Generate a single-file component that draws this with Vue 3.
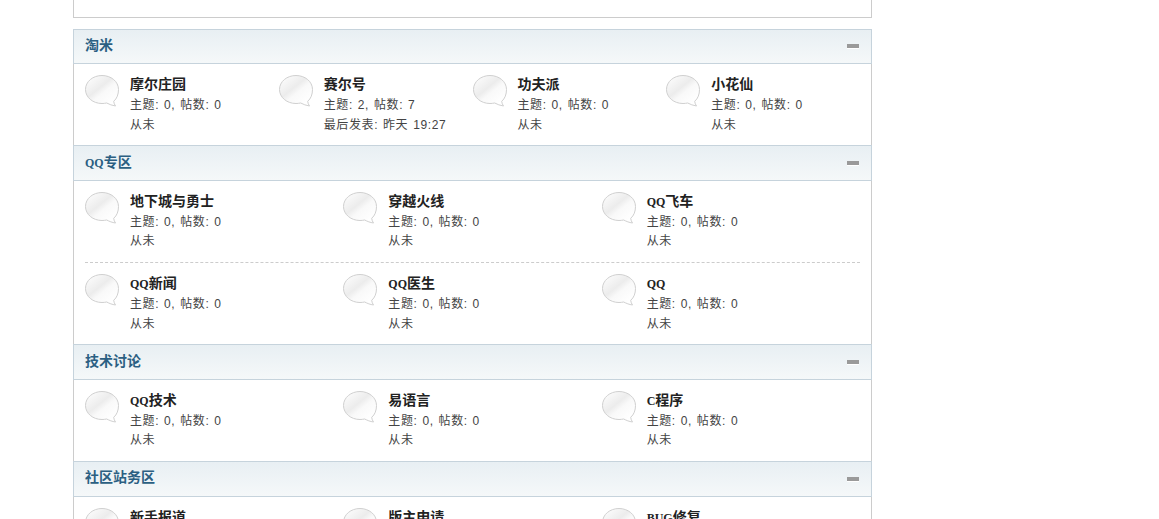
<template>
  <div class="page">
    <div class="top-box"></div>

    <div class="section" v-for="sec in sections" :key="sec.title">
      <div class="section-head">
        <h2>
          <span v-for="(p, i) in splitLatin(sec.title)" :key="i" :class="{ latin: p.latin }">{{ p.text }}</span>
        </h2>
        <span class="collapse"></span>
      </div>
      <div class="section-body">
        <div class="row" :class="'cols-' + sec.cols" v-for="(row, i) in sec.rows" :key="i">
          <div class="forum" v-for="f in row" :key="f.name">
            <svg class="bubble" width="36" height="34" viewBox="0 0 36 34">
              <defs>
                <linearGradient id="bubbleFill" x1="0.1" y1="0.1" x2="0.8" y2="0.9">
                  <stop offset="0" stop-color="#fbfbfb" />
                  <stop offset="0.42" stop-color="#ececec" />
                  <stop offset="0.6" stop-color="#f9f9f9" />
                  <stop offset="1" stop-color="#ffffff" />
                </linearGradient>
              </defs>
              <path
                d="M18 1.500C9 1.500 1.500 7.500 1.500 15.500 1.500 23.500 9 29.500 18 29.500c1.600 0 3.200-.2 4.700-.5 2.600 1.400 5.500 2.500 8.800 3-1-1.300-1.600-2.900-1.800-4.700C32.900 24.600 34.500 20.400 34.500 15.500 34.500 7.500 27 1.500 18 1.500z"
                fill="url(#bubbleFill)"
                stroke="#d0d0d0"
                stroke-width="1"
              />
            </svg>
            <div class="info">
              <div class="name">
                <span v-for="(p, j) in splitLatin(f.name)" :key="j" :class="{ latin: p.latin }">{{ p.text }}</span>
              </div>
              <div class="stat">主题: {{ f.topics }}, 帖数: {{ f.posts }}</div>
              <div class="stat">{{ f.last }}</div>
            </div>
          </div>
        </div>
      </div>
    </div>
  </div>
</template>

<script setup>
const forum = (name, topics = 0, posts = 0, last = '从未') => ({ name, topics, posts, last })

// 拉丁字母比中文窄，单独包一层
const splitLatin = (text) =>
  text.split(/([A-Za-z]+)/).filter(Boolean).map((s) => ({ text: s, latin: /^[A-Za-z]/.test(s) }))

const sections = [
  {
    title: '淘米',
    cols: 4,
    rows: [[forum('摩尔庄园'), forum('赛尔号', 2, 7, '最后发表: 昨天 19:27'), forum('功夫派'), forum('小花仙')]]
  },
  {
    title: 'QQ专区',
    cols: 3,
    rows: [
      [forum('地下城与勇士'), forum('穿越火线'), forum('QQ飞车')],
      [forum('QQ新闻'), forum('QQ医生'), forum('QQ')]
    ]
  },
  {
    title: '技术讨论',
    cols: 3,
    rows: [[forum('QQ技术'), forum('易语言'), forum('C程序')]]
  },
  {
    title: '社区站务区',
    cols: 3,
    rows: [[forum('新手报道'), forum('版主申请'), forum('BUG修复')]]
  }
]
</script>

<style>
html,
body {
  background: #fff;
  overflow: hidden;
}
</style>

<style scoped>
.page {
  width: 799px;
  height: 519px;
  margin-left: 73px;
  overflow: hidden;
  font-family: "Liberation Sans", "Noto Sans CJK SC", sans-serif;
  font-size: 12px;
  color: #333;
}

.top-box {
  height: 18px;
  margin-bottom: 10.5px;
  border: 1px solid #ccc;
  border-top: none;
  box-sizing: border-box;
}

.section {
  border-left: 1px solid #ccc;
  border-right: 1px solid #ccc;
}

.section-head {
  display: flex;
  align-items: center;
  justify-content: space-between;
  box-sizing: border-box;
  height: 35.5px;
  margin: 0 -1px;
  padding: 0 12px 5px 11px;
  border: 1px solid #c6d3dc;
  background: linear-gradient(to bottom, #e8eff3, #f5f8f9);
}

.section-head h2 {
  margin: 0;
  font-family: "Noto Sans CJK SC", sans-serif;
  font-size: 14px;
  line-height: 20px;
  font-weight: bold;
  color: #2b5f82;
}

.collapse {
  display: block;
  width: 12px;
  height: 4px;
  margin-top: 5px;
  background: #9a9a9a;
  box-shadow: 0 1px 0 #fff;
}

.section-body {
  padding: 0 11px;
}

.row {
  display: grid;
  box-sizing: border-box;
  height: 81.3px;
  padding-top: 9px;
}

.row + .row {
  height: 82.3px;
  border-top: 1px dashed #ccc;
}

.cols-4 {
  grid-template-columns: repeat(4, 1fr);
}

.cols-3 {
  grid-template-columns: repeat(3, 1fr);
}

.forum {
  display: flex;
  gap: 10px;
}

.bubble {
  flex: none;
  margin-top: 1px;
  margin-left: -1px;
}

.name {
  height: 20px;
  font-family: "Noto Sans CJK SC", sans-serif;
  font-size: 14px;
  line-height: 20px;
  font-weight: bold;
  color: #222;
}

.latin {
  font-family: "Liberation Serif", serif;
  font-size: 12px;
  line-height: 1;
}

.stat {
  line-height: 19.5px;
  letter-spacing: 0.6px;
  word-spacing: 1px;
  color: #444;
}

.name + .stat {
  margin-top: 3px;
}
</style>
